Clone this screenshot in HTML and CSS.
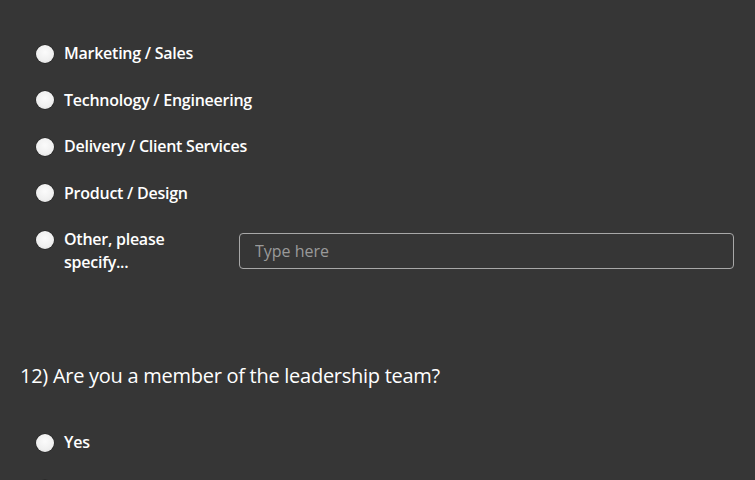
FILE: index.html
```html
<!DOCTYPE html>
<html>
<head>
<meta charset="utf-8">
<link rel="stylesheet" href="styles.css">
</head>
<body>
<div class="survey">
  <div class="options">
    <label class="option"><span class="radio"></span><span class="text">Marketing / Sales</span></label>
    <label class="option"><span class="radio"></span><span class="text">Technology / Engineering</span></label>
    <label class="option"><span class="radio"></span><span class="text">Delivery / Client Services</span></label>
    <label class="option"><span class="radio"></span><span class="text">Product / Design</span></label>
    <div class="option other">
      <label class="other-label"><span class="radio"></span><span class="text">Other, please specify...</span></label>
      <input class="other-input" type="text" placeholder="Type here">
    </div>
  </div>
  <h2 class="question">12) Are you a member of the leadership team?</h2>
  <div class="options second">
    <label class="option"><span class="radio"></span><span class="text">Yes</span></label>
    <label class="option"><span class="radio"></span><span class="text">No</span></label>
  </div>
</div>
</body>
</html>
```
FILE: styles.css
```css
html, body {
  margin: 0;
  padding: 0;
  background: #363636;
  height: 100%;
  overflow: hidden;
}
body {
  font-family: "Open Sans", "Liberation Sans", sans-serif;
  color: #ffffff;
}
.survey {
  padding: 42px 21px 0 20px;
}
.options {
  display: flex;
  flex-direction: column;
  gap: 23.5px;
  padding-left: 16px;
}
.option {
  display: flex;
  align-items: flex-start;
  font-size: 16px;
  font-weight: 600;
  line-height: 23px;
  letter-spacing: -0.25px;
}
.radio {
  flex: none;
  width: 18px;
  height: 18px;
  margin-top: 2.5px;
  margin-right: 10px;
  border-radius: 50%;
  background: radial-gradient(circle at 50% 40%, #fbfbfb 0%, #efefef 60%, #d2d2d2 100%);
  box-shadow: 0 0 0 0.5px rgba(0,0,0,0.4);
}
.other {
  align-items: center;
}
.other-label {
  display: flex;
  align-items: flex-start;
  width: 203px;
  flex: none;
}
.other-label .text {
  width: 130px;
}
.other-input {
  flex: 1;
  height: 36px;
  box-sizing: border-box;
  background: transparent;
  border: 1px solid #a8a8a8;
  border-radius: 4px;
  padding: 0 15px;
  font-family: "Open Sans", "Liberation Sans", sans-serif;
  font-size: 16px;
  color: #ffffff;
  outline: none;
}
.other-input::placeholder {
  color: #9a9a9a;
}
.question {
  margin: 87.5px 0 0 0;
  font-size: 20px;
  font-weight: 400;
  line-height: 27px;
  letter-spacing: -0.27px;
}
.second {
  margin-top: 42.5px;
}
```
